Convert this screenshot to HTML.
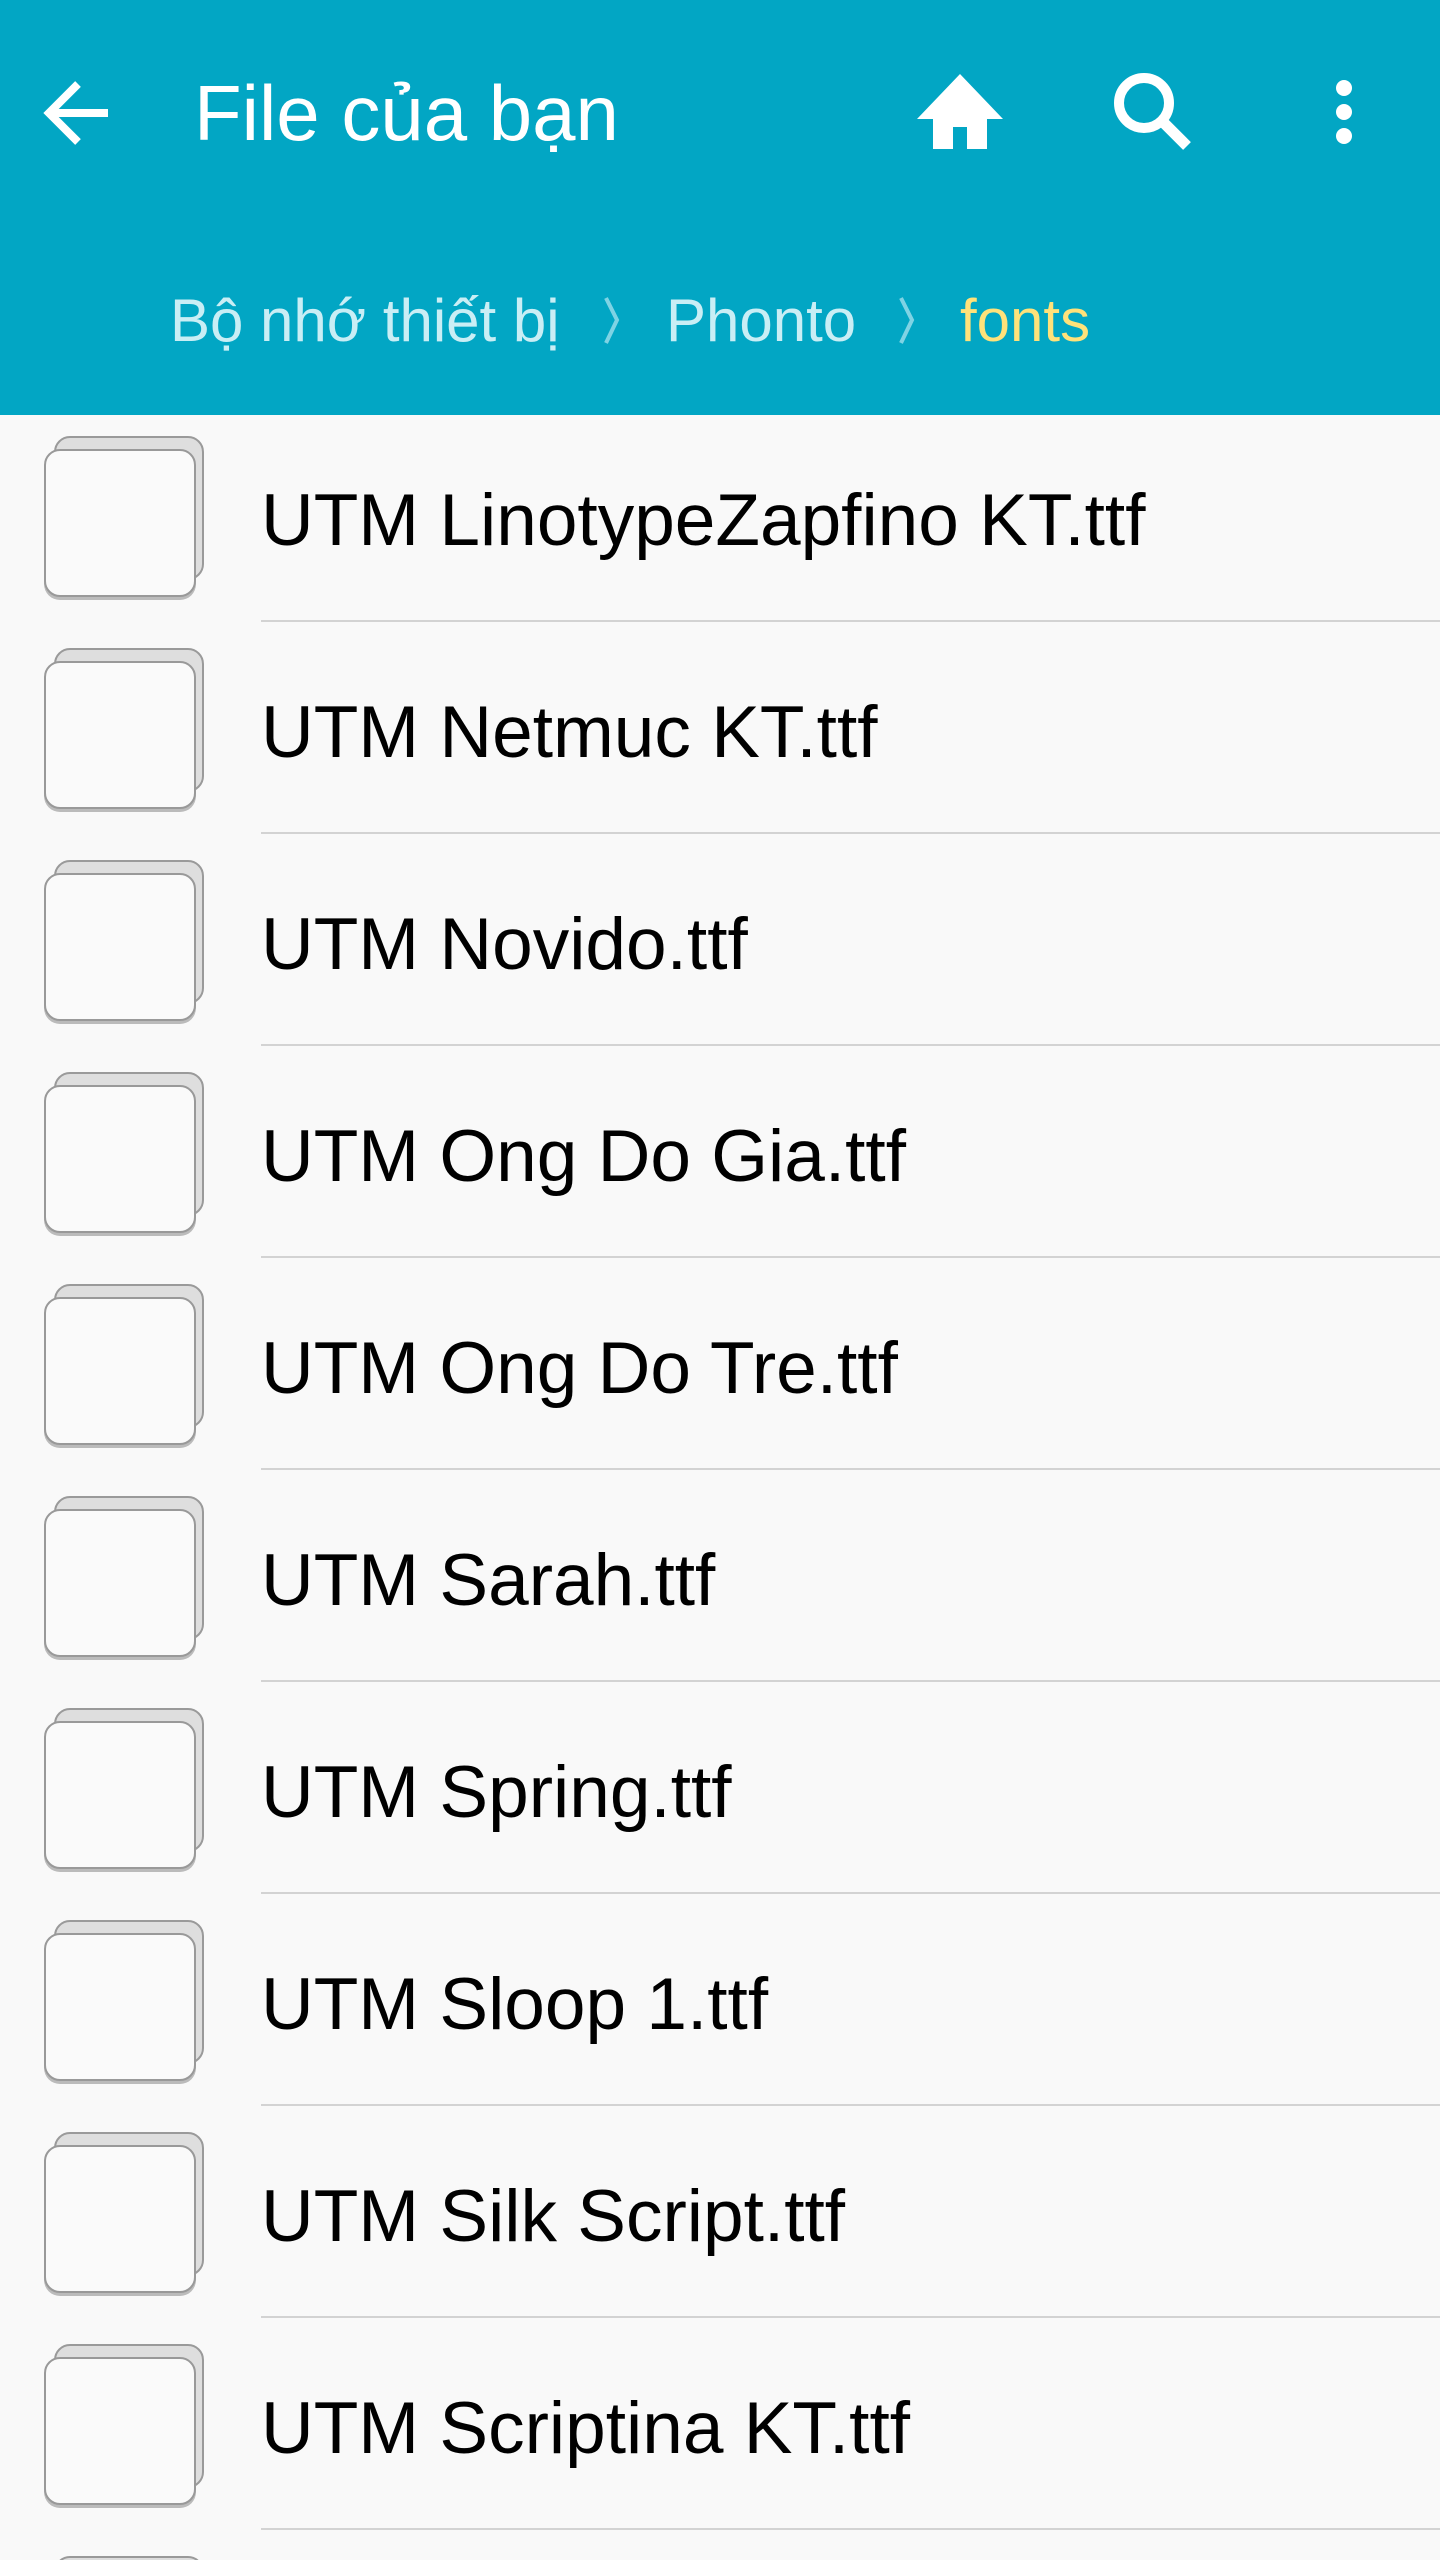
<!DOCTYPE html>
<html style="margin:0;height:2560px;overflow:hidden"><head><meta charset="utf-8"><style>
body{margin:0;width:1440px;height:2560px;background:#f9f9f9;overflow:hidden;font-family:"Liberation Sans",sans-serif;position:relative}
.hdr{position:absolute;left:0;top:0;width:1440px;height:415px;background:#02a6c4}
.t{position:absolute;left:194px;top:68px;font-size:78px;color:#fff;white-space:nowrap}
.bc{position:absolute;left:170px;top:286px;font-size:60px;color:#c9eef5;white-space:nowrap}
.row{position:absolute;left:0;width:1440px;height:212px;overflow:hidden}
.b{position:absolute;left:54px;top:21px;width:150px;height:144px;background:#dedede;border:2px solid #9a9a9a;border-radius:16px;box-sizing:border-box}
.f{position:absolute;left:44px;top:34px;width:152px;height:148px;background:#fafafa;border:2px solid #999;border-radius:16px;box-sizing:border-box;box-shadow:0 3px 0 #bbb}
.n{position:absolute;left:261px;top:64px;font-size:73px;color:#000;white-space:nowrap}
.d{position:absolute;left:261px;right:0;top:205px;height:2px;background:#d3d3d3}
</style></head><body>
<div class="hdr">
<svg style="position:absolute;left:0;top:0" width="1440" height="415">
<path d="M108 113H50M78 84L49 113L78 142" stroke="#fff" stroke-width="8" fill="none"/>
<path d="M917 119L960 74L1003 119H987V149H967V127H953V149H933V119Z" fill="#fff"/>
<circle cx="1144" cy="103" r="25" stroke="#fff" stroke-width="10" fill="none"/>
<path d="M1162 121L1187 146" stroke="#fff" stroke-width="11"/>
<circle cx="1344" cy="88" r="8" fill="#fff"/><circle cx="1344" cy="112" r="8" fill="#fff"/><circle cx="1344" cy="136" r="8" fill="#fff"/>
<path d="M606 298L617 320L606 343M901 298L912 320L901 343" stroke="#7fd3e4" stroke-width="4" fill="none"/>
</svg>
<div class="t">File của bạn</div>
<div class="bc">Bộ nhớ thiết bị<span style="position:absolute;left:496px">Phonto</span><span style="position:absolute;left:790px;color:#ffe27a">fonts</span></div>
</div>
<div class="row" style="top:415px"><div class="b"></div><div class="f"></div><div class="n">UTM LinotypeZapfino KT.ttf</div><div class="d"></div></div>
<div class="row" style="top:627px"><div class="b"></div><div class="f"></div><div class="n">UTM Netmuc KT.ttf</div><div class="d"></div></div>
<div class="row" style="top:839px"><div class="b"></div><div class="f"></div><div class="n">UTM Novido.ttf</div><div class="d"></div></div>
<div class="row" style="top:1051px"><div class="b"></div><div class="f"></div><div class="n">UTM Ong Do Gia.ttf</div><div class="d"></div></div>
<div class="row" style="top:1263px"><div class="b"></div><div class="f"></div><div class="n">UTM Ong Do Tre.ttf</div><div class="d"></div></div>
<div class="row" style="top:1475px"><div class="b"></div><div class="f"></div><div class="n">UTM Sarah.ttf</div><div class="d"></div></div>
<div class="row" style="top:1687px"><div class="b"></div><div class="f"></div><div class="n">UTM Spring.ttf</div><div class="d"></div></div>
<div class="row" style="top:1899px"><div class="b"></div><div class="f"></div><div class="n">UTM Sloop 1.ttf</div><div class="d"></div></div>
<div class="row" style="top:2111px"><div class="b"></div><div class="f"></div><div class="n">UTM Silk Script.ttf</div><div class="d"></div></div>
<div class="row" style="top:2323px"><div class="b"></div><div class="f"></div><div class="n">UTM Scriptina KT.ttf</div><div class="d"></div></div>
<div class="row" style="top:2535px;height:25px"><div class="b"></div><div class="f"></div></div>
</body></html>
